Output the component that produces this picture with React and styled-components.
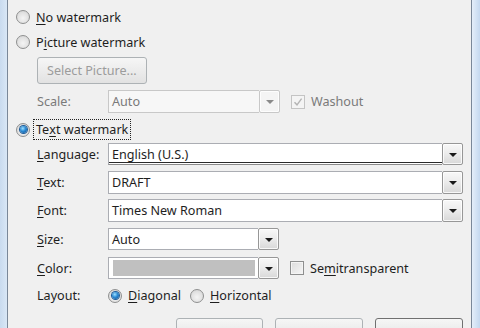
import styled, { createGlobalStyle } from "styled-components";

const GlobalStyle = createGlobalStyle`
  html, body {
    margin: 0;
    padding: 0;
    background: #f0f0f0;
  }
  body {
    font-family: "Noto Sans", "Open Sans", sans-serif;
    font-size: 12.6px;
    color: #1e1e1e;
  }
`;

const Window = styled.div`
  display: flex;
  width: 480px;
  height: 328px;
  overflow: hidden;
  background: #f0f0f0;
`;

const LeftEdge = styled.div`
  flex: none;
  width: 7px;
  background: linear-gradient(to right, #c9dbef, #d9e7f6);
  border-right: 1px solid #7a8899;
`;

const RightEdge = styled.div`
  flex: none;
  width: 8px;
  background: linear-gradient(to right, #e4eef9, #c4d8ef);
  border-left: 1px solid #7a8899;
`;

const Content = styled.div`
  flex: 1;
  display: flex;
  flex-direction: column;
  padding: 0 8px;
`;

const Row = styled.div`
  display: flex;
  align-items: center;
  height: ${(p) => p.$h || 20}px;
  margin-top: ${(p) => p.$top || 0}px;
  flex: none;
`;

const Indent = styled.div`
  display: flex;
  flex-direction: column;
  padding-left: 21px;
`;

const Radio = styled.span`
  flex: none;
  box-sizing: border-box;
  width: 14px;
  height: 14px;
  border-radius: 50%;
  border: 1px solid #8e8f8f;
  background: radial-gradient(circle at 50% 60%, #f4f4f4 0%, #e2e2e2 55%, #cfcfcf 100%);
  display: flex;
  align-items: center;
  justify-content: center;

  &::after {
    content: "";
    display: ${(p) => (p.$on ? "block" : "none")};
    width: 7px;
    height: 7px;
    border-radius: 50%;
    background: radial-gradient(circle at 40% 35%, #9fe0ff 0%, #2a8ad4 45%, #0d4d8f 100%);
    box-shadow: 0 0 0 1px #1e5c99;
  }
`;

const RadioText = styled.span`
  box-sizing: border-box;
  height: 21px;
  display: flex;
  align-items: center;
  margin-left: 3px;
  padding: 0 2px;
  border: 1px dotted ${(p) => (p.$focus ? "#222" : "transparent")};
  white-space: nowrap;
`;

const Key = styled.span`
  text-decoration: underline;
  text-underline-offset: 2px;
`;

const PushButton = styled.div`
  box-sizing: border-box;
  width: ${(p) => p.$w}px;
  height: ${(p) => p.$h}px;
  border: 1px solid ${(p) => (p.$dark ? "#707070" : "#adb2b5")};
  border-radius: 3px;
  background: linear-gradient(to bottom, #f6f6f6, #ececec 50%, #e2e2e2);
  color: #9c9c9c;
  display: flex;
  align-items: center;
  padding-left: 9px;
  white-space: nowrap;
`;

const Label = styled.span`
  flex: none;
  width: 71px;
  color: ${(p) => (p.$dim ? "#7a7a7a" : "#1e1e1e")};
  white-space: nowrap;
`;

const Combo = styled.div`
  display: flex;
  height: 100%;
  ${(p) => (p.$w ? `width: ${p.$w}px; flex: none;` : "flex: 1;")}
`;

const ComboField = styled.div`
  flex: 1;
  box-sizing: border-box;
  display: flex;
  align-items: center;
  padding: 0 3px;
  border: 1px solid ${(p) => (p.$dim ? "#c8c8c8" : "#abadb3")};
  border-right: none;
  background: ${(p) => (p.$dim ? "#f7f7f7" : "#ffffff")};
  color: ${(p) => (p.$dim ? "#7a7a7a" : "#1e1e1e")};
  white-space: nowrap;
  ${(p) =>
    p.$underline &&
    `border-bottom: 1px solid #8a8a8a;
     box-shadow: inset 0 -1px 0 #ffffff, inset 0 -2px 0 #2a2a2a;`}
`;

const Swatch = styled.div`
  flex: 1;
  align-self: stretch;
  margin: 2px 0 2px 1px;
  background: #c0c0c0;
`;

const DropButton = styled.div`
  flex: none;
  box-sizing: border-box;
  width: 21px;
  height: 100%;
  border: 1px solid ${(p) => (p.$dim ? "#c8c8c8" : "#979797")};
  border-radius: 2px;
  background: ${(p) =>
    p.$dim
      ? "#f4f4f4"
      : "linear-gradient(to bottom, #f8f8f8, #ebebeb 50%, #d8d8d8)"};
  box-shadow: inset 0 0 0 1px rgba(255, 255, 255, 0.8);
  display: flex;
  align-items: center;
  justify-content: center;

  &::after {
    content: "";
    width: 0;
    height: 0;
    margin-top: 1px;
    border-left: 4px solid transparent;
    border-right: 4px solid transparent;
    border-top: 4px solid ${(p) => (p.$dim ? "#8a8a8a" : "#1a1a1a")};
  }
`;

const Check = styled.span`
  flex: none;
  box-sizing: border-box;
  width: 14px;
  height: 14px;
  border: 1px solid ${(p) => (p.$dim ? "#c4c4c4" : "#8e8f8f")};
  background: ${(p) =>
    p.$dim ? "#f4f4f4" : "linear-gradient(135deg, #dcdcdc, #f6f6f6)"};
  box-shadow: inset 0 0 0 1px #f4f4f4;
  margin-left: 11px;
  display: flex;
  align-items: center;
  justify-content: center;
`;

const CheckText = styled.span`
  margin-left: 6px;
  color: ${(p) => (p.$dim ? "#7a7a7a" : "#1e1e1e")};
  white-space: nowrap;
`;

const OptionText = styled.span`
  margin-left: 6px;
  margin-right: 9px;
  white-space: nowrap;
`;

const ButtonBar = styled.div`
  display: flex;
  justify-content: flex-end;
  gap: 12px;
  margin-top: 12px;
  flex: none;
`;

function ComboBox({ value, w, dim, underline, swatch }) {
  return (
    <Combo $w={w}>
      <ComboField $dim={dim} $underline={underline}>
        {swatch ? <Swatch /> : value}
      </ComboField>
      <DropButton $dim={dim} />
    </Combo>
  );
}

export default function App() {
  return (
    <>
      <GlobalStyle />
      <Window>
        <LeftEdge />
        <Content>
          <Row $top={7}>
            <Radio />
            <RadioText>
              <Key>N</Key>o watermark
            </RadioText>
          </Row>
          <Row $top={5}>
            <Radio />
            <RadioText>
              P<Key>i</Key>cture watermark
            </RadioText>
          </Row>
          <Indent>
            <Row $top={5} $h={27}>
              <PushButton $w={110} $h={27}>
                Select Picture...
              </PushButton>
            </Row>
            <Row $top={6} $h={23}>
              <Label $dim>Scale:</Label>
              <ComboBox value="Auto" w={172} dim />
              <Check $dim>
                <svg width="10" height="10" viewBox="0 0 10 10">
                  <path d="M1.5 5.2 L4 7.8 L8.6 1.6" fill="none" stroke="#b4b4b4" strokeWidth="1.4" />
                </svg>
              </Check>
              <CheckText $dim>Washout</CheckText>
            </Row>
          </Indent>
          <Row $top={6} $h={21}>
            <Radio $on />
            <RadioText $focus>
              Te<Key>x</Key>t watermark
            </RadioText>
          </Row>
          <Indent>
            <Row $top={3} $h={22}>
              <Label>
                <Key>L</Key>anguage:
              </Label>
              <ComboBox value="English (U.S.)" underline />
            </Row>
            <Row $top={6} $h={23}>
              <Label>
                <Key>T</Key>ext:
              </Label>
              <ComboBox value="DRAFT" />
            </Row>
            <Row $top={5} $h={23}>
              <Label>
                <Key>F</Key>ont:
              </Label>
              <ComboBox value="Times New Roman" />
            </Row>
            <Row $top={6} $h={22}>
              <Label>
                <Key>S</Key>ize:
              </Label>
              <ComboBox value="Auto" w={171} />
            </Row>
            <Row $top={7} $h={22}>
              <Label>
                <Key>C</Key>olor:
              </Label>
              <ComboBox w={171} swatch />
              <Check />
              <CheckText>
                Se<Key>m</Key>itransparent
              </CheckText>
            </Row>
            <Row $top={6} $h={21}>
              <Label>Layout:</Label>
              <Radio $on />
              <OptionText>
                <Key>D</Key>iagonal
              </OptionText>
              <Radio />
              <OptionText>
                <Key>H</Key>orizontal
              </OptionText>
            </Row>
          </Indent>
          <ButtonBar>
            <PushButton $w={87} $h={23} />
            <PushButton $w={88} $h={23} />
            <PushButton $w={88} $h={23} $dark />
          </ButtonBar>
        </Content>
        <RightEdge />
      </Window>
    </>
  );
}
